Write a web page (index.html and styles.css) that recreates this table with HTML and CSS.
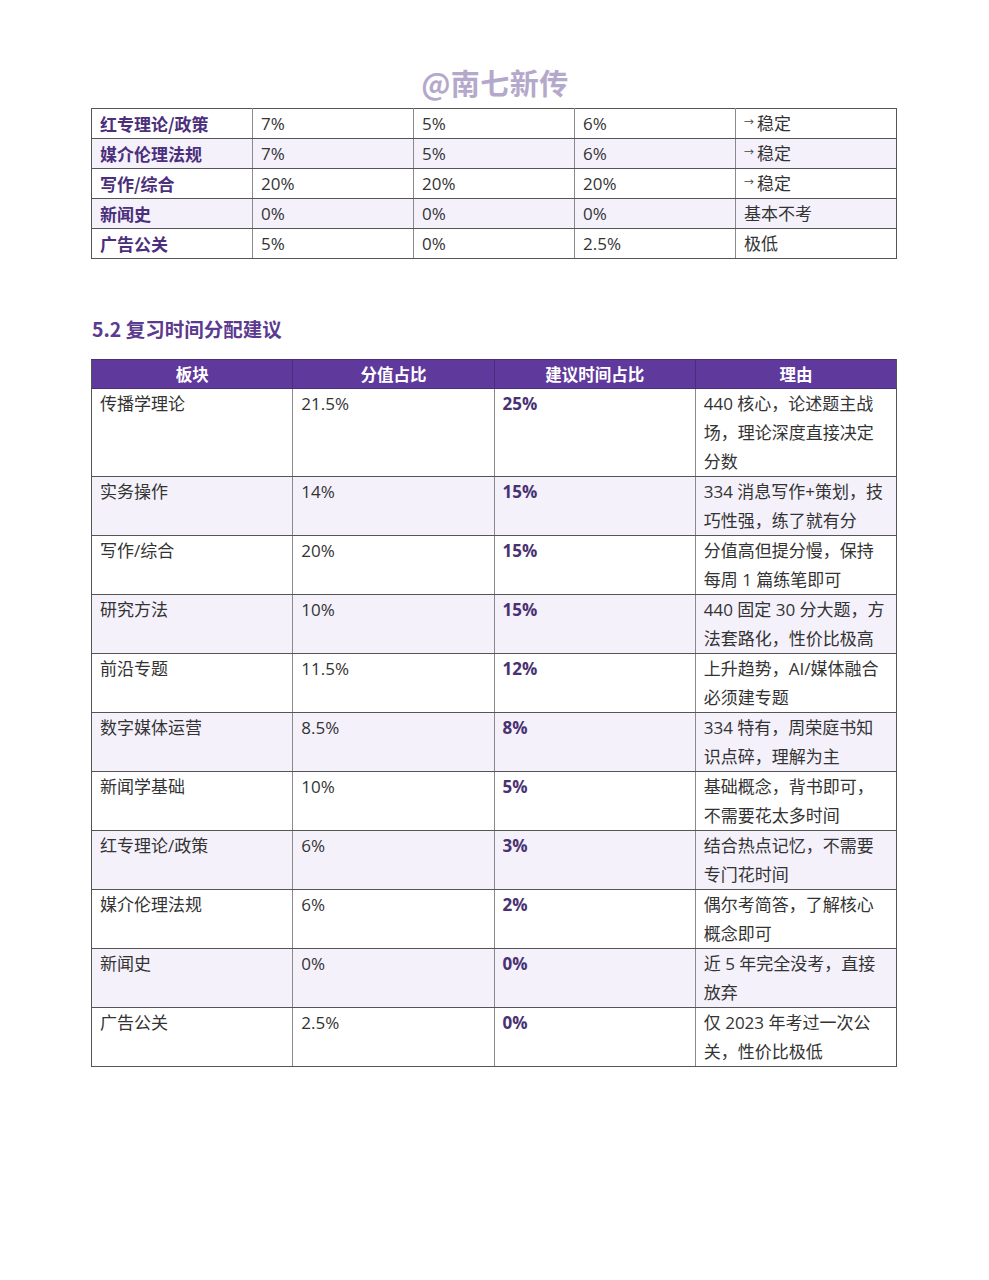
FILE: index.html
```html
<!DOCTYPE html>
<html lang="zh-CN">
<head>
<meta charset="utf-8">
<title>5.2 复习时间分配建议</title>
<link rel="stylesheet" href="styles.css">
</head>
<body>
<div class="page">
  <div class="watermark">@南七新传</div>

  <table class="tbl tbl-trend">
    <colgroup><col><col><col><col><col></colgroup>
    <tbody>
      <tr><td class="name">红专理论/政策</td><td>7%</td><td>5%</td><td>6%</td><td><span class="arrow">→</span>稳定</td></tr>
      <tr class="alt"><td class="name">媒介伦理法规</td><td>7%</td><td>5%</td><td>6%</td><td><span class="arrow">→</span>稳定</td></tr>
      <tr><td class="name">写作/综合</td><td>20%</td><td>20%</td><td>20%</td><td><span class="arrow">→</span>稳定</td></tr>
      <tr class="alt"><td class="name">新闻史</td><td>0%</td><td>0%</td><td>0%</td><td>基本不考</td></tr>
      <tr><td class="name">广告公关</td><td>5%</td><td>0%</td><td>2.5%</td><td>极低</td></tr>
    </tbody>
  </table>

  <h2 class="section-title">5.2 复习时间分配建议</h2>

  <table class="tbl tbl-plan">
    <colgroup><col><col><col><col></colgroup>
    <thead>
      <tr><th>板块</th><th>分值占比</th><th>建议时间占比</th><th>理由</th></tr>
    </thead>
    <tbody>
      <tr><td>传播学理论</td><td>21.5%</td><td class="em">25%</td><td class="why">440 核心，论述题主战场，理论深度直接决定分数</td></tr>
      <tr class="alt"><td>实务操作</td><td>14%</td><td class="em">15%</td><td class="why">334 消息写作+策划，技巧性强，练了就有分</td></tr>
      <tr><td>写作/综合</td><td>20%</td><td class="em">15%</td><td class="why">分值高但提分慢，保持每周 1 篇练笔即可</td></tr>
      <tr class="alt"><td>研究方法</td><td>10%</td><td class="em">15%</td><td class="why">440 固定 30 分大题，方法套路化，性价比极高</td></tr>
      <tr><td>前沿专题</td><td>11.5%</td><td class="em">12%</td><td class="why">上升趋势，AI/媒体融合必须建专题</td></tr>
      <tr class="alt"><td>数字媒体运营</td><td>8.5%</td><td class="em">8%</td><td class="why">334 特有，周荣庭书知识点碎，理解为主</td></tr>
      <tr><td>新闻学基础</td><td>10%</td><td class="em">5%</td><td class="why">基础概念，背书即可，不需要花太多时间</td></tr>
      <tr class="alt"><td>红专理论/政策</td><td>6%</td><td class="em">3%</td><td class="why">结合热点记忆，不需要专门花时间</td></tr>
      <tr><td>媒介伦理法规</td><td>6%</td><td class="em">2%</td><td class="why">偶尔考简答，了解核心概念即可</td></tr>
      <tr class="alt"><td>新闻史</td><td>0%</td><td class="em">0%</td><td class="why">近 5 年完全没考，直接放弃</td></tr>
      <tr><td>广告公关</td><td>2.5%</td><td class="em">0%</td><td class="why">仅 2023 年考过一次公关，性价比极低</td></tr>
    </tbody>
  </table>
</div>
</body>
</html>
```

FILE: styles.css
```css
html, body {
  margin: 0;
  padding: 0;
  background: #ffffff;
}

body {
  font-family: "Open Sans", "Noto Sans CJK SC", sans-serif;
  color: #333333;
}

.page {
  width: 806px;
  margin: 0 0 0 91px;
  padding-top: 62px;
}

.watermark {
  text-align: center;
  font-family: "Noto Sans CJK SC", sans-serif;
  font-weight: 700;
  font-size: 29px;
  line-height: 40px;
  height: 46px;
  color: #b5a9cb;
  letter-spacing: 0.5px;
  padding-left: 2px;
}

.tbl {
  width: 806px;
  border-collapse: collapse;
  table-layout: fixed;
  font-size: 17px;
  color: #333333;
}

.tbl td,
.tbl th {
  border: 1px solid #555555;
  border-left-color: #8a8a8a;
  border-right-color: #8a8a8a;
  padding: 0 8px;
  line-height: 29px;
  vertical-align: top;
  text-align: left;
  font-weight: 400;
}

.tbl td:first-child,
.tbl th:first-child { border-left-color: #555555; }
.tbl td:last-child,
.tbl th:last-child { border-right-color: #555555; }

.tbl tr.alt td {
  background: #f4f1fb;
}

.tbl-trend td.name {
  font-family: "Noto Sans CJK SC", sans-serif;
  font-weight: 700;
  color: #4b2f7c;
}

.arrow {
  display: inline-block;
  font-size: 10px;
  width: 13px;
  vertical-align: top;
  line-height: 27px;
  color: #444444;
}

.section-title {
  margin: 55px 0 15px 1px;
  font-family: "Noto Sans CJK SC", sans-serif;
  font-weight: 700;
  font-size: 19.5px;
  line-height: 30px;
  color: #5b3a8f;
}

.tbl-plan th {
  background: #5f399b;
  color: #ffffff;
  font-family: "Noto Sans CJK SC", sans-serif;
  font-weight: 700;
  font-size: 16.5px;
  text-align: center;
  line-height: 28px;
  border-color: #4a2e7a;
}

.tbl-plan td.why {
  padding-right: 11px;
}

.tbl-plan td.em {
  font-weight: 700;
  color: #4a3272;
}
```
